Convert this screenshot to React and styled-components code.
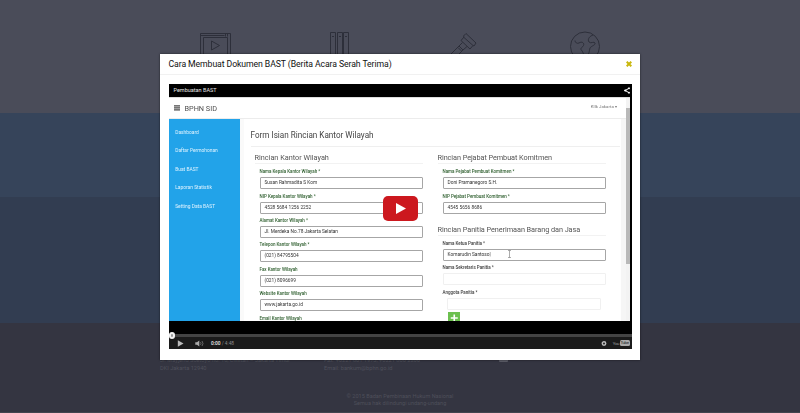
import React from 'react';
import styled, { createGlobalStyle } from 'styled-components';

const Global = createGlobalStyle`
  * { box-sizing: border-box; }
  html, body { margin: 0; overflow: hidden; }
  body { font-family: Roboto, "Liberation Sans", sans-serif; background: #343541; }
`;

const Page = styled.div`
  position: relative;
  width: 800px;
  height: 413px;
  overflow: hidden;
  display: flex;
  flex-direction: column;
`;
const Band = styled.section`
  flex: 0 0 ${p => p.$h}px;
  background: ${p => p.$bg};
`;
const Services = styled(Band)`
  padding: 31px 160px 0;
  display: grid;
  grid-template-columns: 110px 137px 109px 137px;
  justify-items: center;
  align-items: start;
`;
const LineIcon = styled.svg`
  width: 34px;
  height: 34px;
  fill: none;
  stroke: #2d2f3a;
  stroke-width: 1;
`;
const Footer = styled.footer`
  flex: 1;
  background: #343541;
  color: #4e4f5a;
  font-size: 5.65px;
  line-height: 7.6px;
  border-bottom: 1px solid #42454f;
`;
const FooterColumns = styled.div`
  display: grid;
  grid-template-columns: 164px 175px 20px;
  padding: 34px 0 0 160px;
`;
const Address = styled.div`
  white-space: nowrap;
`;
const Social = styled.div`
  width: 9px;
  height: 5px;
  border-radius: 1px;
  background: #5a5b66;
`;
const Copyright = styled.div`
  margin-top: 20.4px;
  text-align: center;
  font-size: 5.55px;
`;

const Overlay = styled.div`
  position: absolute;
  inset: 0;
  display: flex;
  justify-content: center;
  align-items: flex-start;
  padding-top: 54px;
`;
const Modal = styled.div`
  width: 480px;
  height: 305.5px;
  background: #fff;
  box-shadow: 0 0 2px rgba(0, 0, 0, 0.6);
`;
const ModalHeader = styled.header`
  height: 21px;
  padding: 0 8.5px;
  display: flex;
  align-items: center;
  justify-content: space-between;
  border-bottom: 1px solid #f1f1f1;
`;
const ModalTitle = styled.h1`
  margin: 0;
  font-size: 8.7px;
  font-weight: 400;
  letter-spacing: -0.09px;
  color: #111;
  white-space: nowrap;
`;
const Close = styled.button`
  padding: 0;
  border: 0;
  background: none;
  display: flex;
  svg { width: 6px; height: 6px; stroke: #c9b70c; stroke-width: 2; }
`;
const Player = styled.div`
  margin: 8.5px 8px 0 8.5px;
  height: 265.5px;
  position: relative;
  background: #000;
  display: flex;
  flex-direction: column;
`;
const PlayerTop = styled.div`
  flex: 0 0 13.5px;
  padding: 0 2px 0 5px;
  display: flex;
  align-items: center;
  justify-content: space-between;
  color: #e6e6e6;
  font-size: 5.5px;
  svg { width: 6px; height: 7px; }
`;
const Frame = styled.div`
  flex: 0 0 223.5px;
  margin-right: 2px;
  background: #fff;
  border-top: 1px solid #ddd;
  overflow: hidden;
  display: flex;
`;
const Site = styled.div`
  flex: 1;
  min-width: 0;
  display: flex;
  flex-direction: column;
`;
const SiteHeader = styled.div`
  flex: 0 0 21px;
  padding: 0 9px 0 5px;
  display: flex;
  align-items: center;
  border-bottom: 1px solid #ececec;
  color: #606060;
`;
const Burger = styled.span`
  width: 6px;
  height: 6px;
  margin-right: 5px;
  background: repeating-linear-gradient(#777 0 1px, #a0a0a0 1px 2px);
  filter: blur(0.3px);
`;
const Brand = styled.span`
  font-size: 7.3px;
  color: #505050;
  filter: blur(0.3px);
`;
const Account = styled.span`
  margin: -3px 0 0 auto;
  font-size: 4.4px;
  color: #777;
  filter: blur(0.35px);
`;
const SiteBody = styled.div`
  flex: 1;
  min-height: 0;
  display: flex;
`;
const Sidebar = styled.nav`
  flex: 0 0 71.5px;
  background: #22a3e9;
  padding: 3.5px 0 0 6.7px;
  color: #dff3ff;
`;
const NavItem = styled.div`
  height: 18.6px;
  line-height: 18.6px;
  font-size: 4.9px;
  filter: blur(0.35px);
  white-space: nowrap;
`;
const Main = styled.div`
  flex: 1;
  padding: 0 1px 0 10.5px;
  border-left: 4px solid #fafafa;
  border-right: 5px solid #f6f6f6;
  overflow: hidden;
`;
const PageTitle = styled.h2`
  margin: 0 0 0 -4px;
  height: 28px;
  line-height: 32px;
  font-size: 8.15px;
  font-weight: 400;
  color: #444;
  border-bottom: 1px solid #efefef;
  filter: blur(0.3px);
`;
const Columns = styled.div`
  display: grid;
  grid-template-columns: 168px 168px;
  column-gap: 15px;
`;
const Section = styled.div`
  padding-top: ${p => p.$top}px;
`;
const SectionTitle = styled.h3`
  margin: 0 0 3.4px;
  height: 12px;
  line-height: 11px;
  font-size: 7.3px;
  font-weight: 400;
  color: #555;
  letter-spacing: ${p => p.$ls || 0}px;
  white-space: nowrap;
  border-bottom: 1px solid #f2f2f2;
  filter: blur(0.3px);
`;
const Group = styled.div`
  margin: 0 0 2.4px 5px;
`;
const Label = styled.div`
  height: 10px;
  line-height: 10.6px;
  font-size: 4.5px;
  font-weight: 500;
  letter-spacing: -0.02px;
  white-space: nowrap;
  color: ${p => (p.$valid ? '#2f5f2f' : '#3c3c3c')};
  filter: blur(0.35px);
`;
const Input = styled.div`
  height: 12px;
  margin: 0 ${p => (p.$faint === 'inset' ? 5 : 0)}px 0 ${p => (p.$faint === 'inset' ? 4 : 0)}px;
  padding-left: 4px;
  border: 1px solid ${p => (p.$faint ? '#f0f0f0' : '#a6a6a6')};
  border-radius: 1px;
  line-height: 10px;
  font-size: 4.8px;
  color: #333;
  white-space: nowrap;
  span { display: block; filter: blur(0.35px); }
`;
const AddButton = styled.svg`
  display: block;
  width: 12.5px;
  height: 12px;
  margin: 1.5px 0 0 10px;
  background: #6cc04f;
  stroke: #fff;
  stroke-width: 1.6;
`;
const ScrollTrack = styled.div`
  flex: 0 0 4px;
  padding-top: 10px;
  background: #f3f3f3;
`;
const ScrollThumb = styled.div`
  height: 156px;
  background: #b9b9b9;
`;
const PlayButton = styled.button`
  position: absolute;
  left: 214.5px;
  top: 112.5px;
  width: 35px;
  height: 24.5px;
  padding: 0;
  border: 0;
  border-radius: 5px;
  background: #cc181e;
  display: grid;
  place-items: center;
  svg { width: 11px; height: 11px; fill: #fff; }
`;
const TextCursor = styled.svg`
  position: absolute;
  left: 338px;
  top: 166px;
  width: 5px;
  height: 8px;
  stroke: #888;
  stroke-width: 0.7;
  fill: none;
`;
const Progress = styled.div`
  flex: 0 0 3.5px;
  margin-top: 13px;
  background: #444;
`;
const Scrubber = styled.div`
  position: absolute;
  left: 0;
  top: 248.5px;
  width: 6.5px;
  height: 6.5px;
  border-radius: 50%;
  border: 2px solid #f2f2f2;
  background: #999;
`;
const Controls = styled.div`
  flex: 1;
  padding: 0 2.5px 0 8.5px;
  display: flex;
  align-items: center;
  background: #1b1b1b;
  font-size: 4.8px;
  color: #8d8d8d;
`;
const ControlIcon = styled.svg`
  width: ${p => p.$w}px;
  height: 7px;
  margin-right: ${p => p.$gap || 0}px;
`;
const Now = styled.b`
  color: #eee;
  font-weight: 500;
`;
const Time = styled.span`
  margin-right: auto;
  white-space: pre;
`;
const Logo = styled.span`
  display: flex;
  align-items: center;
  height: 7px;
  font-size: 4.4px;
  letter-spacing: -0.35px;
  color: #999;
`;
const Tube = styled.span`
  height: 6.5px;
  line-height: 6.5px;
  margin-left: 0.5px;
  padding: 0 0.8px;
  border-radius: 1.5px;
  background: #aaa;
  color: #222;
`;

const office = [
  ['Nama Kepala Kantor Wilayah *', 'Susan Rahmadita S Kom'],
  ['NIP Kepala Kantor Wilayah *', '4528 5684 1256 2252'],
  ['Alamat Kantor Wilayah *', 'Jl. Merdeka No.78 Jakarta Selatan'],
  ['Telepon Kantor Wilayah *', '(021) 84795504'],
  ['Fax Kantor Wilayah', '(021) 8096699'],
  ['Website Kantor Wilayah', 'www.jakarta.go.id'],
];
const official = [
  ['Nama Pejabat Pembuat Komitmen *', 'Doni Pramanegoro S.H.'],
  ['NIP Pejabat Pembuat Komitmen *', '4545 5656 8686'],
];
const committee = [
  ['Nama Ketua Panitia *', 'Komarudin Santoso|'],
  ['Nama Sekretaris Panitia *', '', 'full'],
  ['Anggota Panitia *', '', 'inset'],
];

const Fields = ({ items, valid }) =>
  items.map(([label, value, faint]) => (
    <Group key={label}>
      <Label $valid={valid}>{label}</Label>
      <Input $faint={faint}><span>{value}</span></Input>
    </Group>
  ));

export default function App() {
  return (
    <Page>
      <Global />
      <Services $h={113} $bg="#4a4c59">
        <LineIcon viewBox="0 0 34 34">
          <path d="M2.500 2.500h30v28h-30zM5.500 30.500v-24h24v24M2.500 4.500h24M27.500 3v2.500M29.500 3v2.500M13.500 10v9l8-4.500z" />
        </LineIcon>
        <LineIcon viewBox="0 0 34 34">
          <path d="M8.500 1.500h5v29h-5zM15.500 1.500h5v29h-5zM21.500 1.500h5v29h-5zM10 5.500h2M17 5.500h2M23 5.500h2" />
        </LineIcon>
        <LineIcon viewBox="0 0 34 34">
          <path d="M21 2.500l10 9.500-2 3-1-.500-3 3.500-9-8.500 3-3.500-.500-1zM19 6.500l9 8M17.500 11.500l-3.500 3.500 4 4 4-3.500M14 15L4 25M18 19L9 28M13 16.500l3.500 3.500" />
        </LineIcon>
        <LineIcon viewBox="0 0 34 34">
          <circle cx="17" cy="15.500" r="14.500" />
          <path d="M7 9.500c0 2 2 3.500 4 2.500 3-2 5.500 0 4.500 2.500-1 2-3 2-2.500 4 2 2 2.500 5 4 8M25 4c-3 1-6 4-4 7 2 2 5-1 6 1 1 2-4 3-5 5-1 3 0 5-4 9" />
        </LineIcon>
      </Services>
      <Band $h={84} $bg="#36445a" />
      <Band $h={126} $bg="#323d51" />
      <Footer>
        <FooterColumns>
          <Address>Jl. Mayjend Soetoyo no. 10, Cililitan – Jakarta Timur<br />DKI Jakarta 12940</Address>
          <Address>Fax: +6221 801 1973, +6221 800 2266<br />Email: bankum@bphn.go.id</Address>
          <Social />
        </FooterColumns>
        <Copyright>© 2015 Badan Pembinaan Hukum Nasional<br />Semua hak dilindungi undang-undang</Copyright>
      </Footer>

      <Overlay>
        <Modal>
          <ModalHeader>
            <ModalTitle>Cara Membuat Dokumen BAST (Berita Acara Serah Terima)</ModalTitle>
            <Close aria-label="Tutup"><svg viewBox="0 0 6 6"><path d="M.7.7l4.600 4.600M5.300.7L.7 5.300" /></svg></Close>
          </ModalHeader>
          <Player>
            <PlayerTop>
              <span>Pembuatan BAST</span>
              <svg viewBox="0 0 6 7" fill="#fff" stroke="#fff"><path d="M5 1.300L1.200 3.500 5 5.700" fill="none" /><circle cx="5" cy="1.300" r=".6" /><circle cx="1.200" cy="3.500" r=".7" /><circle cx="5" cy="5.700" r=".6" /></svg>
            </PlayerTop>
            <Frame>
              <Site>
                <SiteHeader><Burger /><Brand>BPHN SID</Brand><Account>Kllk Jakarta ▾</Account></SiteHeader>
                <SiteBody>
                  <Sidebar>
                    <NavItem>Dashboard</NavItem>
                    <NavItem>Daftar Permohonan</NavItem>
                    <NavItem>Buat BAST</NavItem>
                    <NavItem>Laporan Statistik</NavItem>
                    <NavItem>Setting Data BAST</NavItem>
                  </Sidebar>
                  <Main>
                    <PageTitle>Form Isian Rincian Kantor Wilayah</PageTitle>
                    <Columns>
                      <Section $top={4.8}>
                        <SectionTitle>Rincian Kantor Wilayah</SectionTitle>
                        <Fields items={office} valid />
                        <Group><Label $valid>Email Kantor Wilayah</Label></Group>
                      </Section>
                      <div>
                        <Section $top={4.8}>
                          <SectionTitle $ls={-0.07}>Rincian Pejabat Pembuat Komitmen</SectionTitle>
                          <Fields items={official} valid />
                        </Section>
                        <Section $top={7.6}>
                          <SectionTitle $ls={-0.06}>Rincian Panitia Penerimaan Barang dan Jasa</SectionTitle>
                          <Fields items={committee} />
                          <AddButton viewBox="0 0 12 12"><path d="M6 2.500v7M2.500 6h7" /></AddButton>
                        </Section>
                      </div>
                    </Columns>
                  </Main>
                </SiteBody>
              </Site>
              <ScrollTrack><ScrollThumb /></ScrollTrack>
            </Frame>
            <Progress />
            <Controls>
              <ControlIcon $w={7} $gap={11} viewBox="0 0 7 7" fill="#bbb"><path d="M.8.300L6.500 3.500.8 6.700z" /></ControlIcon>
              <ControlIcon $w={9} $gap={7} viewBox="0 0 9 7" fill="#aaa"><path d="M.3 2.300h1.700L4.300.4v6.200L2 4.700H.3z" /><path d="M5.500 2.200q1 1.300 0 2.600M7 1q2 2.500 0 5" fill="none" stroke="#888" strokeWidth=".7" /></ControlIcon>
              <Time><Now>0:00</Now> / 4:48</Time>
              <ControlIcon $w={6} $gap={6} viewBox="0 0 6 7"><circle cx="3" cy="3.500" r="1.700" fill="none" stroke="#bbb" strokeWidth="1.500" /></ControlIcon>
              <Logo>You<Tube>Tube</Tube></Logo>
            </Controls>
            <Scrubber />
            <PlayButton aria-label="Putar"><svg viewBox="0 0 11 11"><path d="M1 0l10 5.500L1 11z" /></svg></PlayButton>
            <TextCursor viewBox="0 0 5 8"><path d="M1 .5h3M2.500.5v7M1 7.500h3" /></TextCursor>
          </Player>
        </Modal>
      </Overlay>
    </Page>
  );
}
